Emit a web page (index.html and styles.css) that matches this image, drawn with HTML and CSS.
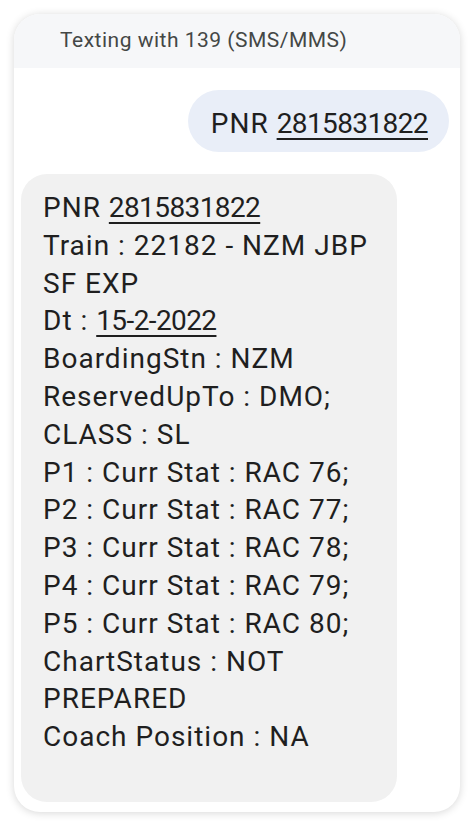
FILE: index.html
```html
<!DOCTYPE html>
<html lang="en">
<head>
<meta charset="utf-8"/>
<meta content="width=device-width, initial-scale=1.0" name="viewport"/>
<title>Texting with 139</title>
<link rel="stylesheet" href="styles.css">
</head>
<body>
<main class="card">
<header class="thread-head">Texting with 139 (SMS/MMS)</header>
<section class="thread">
<div class="msg msg-out">PNR <u>2815831822</u></div>
<div class="msg msg-in">
<p>PNR <u>2815831822</u></p>
<p>Train : 22182 - NZM JBP SF EXP</p>
<p>Dt : <u>15-2-2022</u></p>
<p>BoardingStn : NZM</p>
<p>ReservedUpTo : DMO;</p>
<p>CLASS : SL</p>
<p>P1 : Curr Stat : RAC 76;</p>
<p>P2 : Curr Stat : RAC 77;</p>
<p>P3 : Curr Stat : RAC 78;</p>
<p>P4 : Curr Stat : RAC 79;</p>
<p>P5 : Curr Stat : RAC 80;</p>
<p>ChartStatus : NOT PREPARED</p>
<p>Coach Position : NA</p>
</div>
</section>
</main>
</body>
</html>
```
FILE: styles.css
```css
* {
  box-sizing: border-box;
}

body {
  margin: 0;
  background: #ffffff;
  font-family: Roboto, "Noto Sans", sans-serif;
  color: #1f1f1f;
}

.card {
  margin: 14px;
  height: 798px;
  border-radius: 26px;
  background: #ffffff;
  box-shadow: 0 1px 9px rgba(0, 0, 0, 0.16);
  overflow: hidden;
}

.thread-head {
  height: 54px;
  padding: 13px 0 0 46px;
  background: #f6f7f9;
  color: #444746;
  font-size: 21px;
  line-height: 26px;
  letter-spacing: 0.5px;
}

.thread {
  display: flex;
  flex-direction: column;
  gap: 22px;
  padding: 22px 11px 0 7px;
}

.msg {
  font-size: 28px;
  line-height: 37.8px;
  letter-spacing: 1px;
}

.msg u {
  letter-spacing: -0.6px;
  text-decoration-thickness: 2px;
  text-underline-offset: 5px;
}

.msg-out {
  align-self: flex-end;
  height: 62px;
  padding: 15px 21px 0 23px;
  border-radius: 31px;
  background: #e9eef8;
}

.msg-in {
  width: 376px;
  padding: 15px 22px 46px 22px;
  border-radius: 26px;
  background: #f1f1f1;
}

.msg-in p {
  margin: 0;
}
```
